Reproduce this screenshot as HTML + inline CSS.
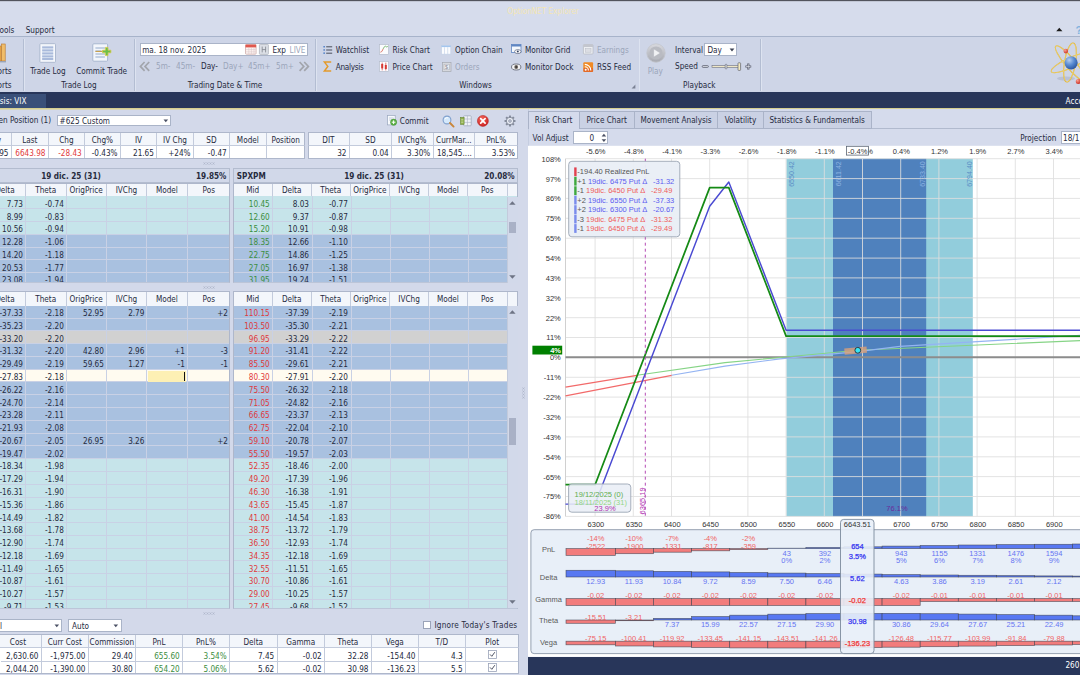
<!DOCTYPE html>
<html><head><meta charset="utf-8"><title>OptionNET Explorer</title>
<style>
html,body{margin:0;padding:0;background:#d3d9ea;}
#app{position:relative;width:1080px;height:675px;overflow:hidden;background:#d3d9ea;font-family:"DejaVu Sans Condensed","Liberation Sans",sans-serif;font-size:8.15px;color:#262b3e;}
#app div{position:absolute;box-sizing:border-box;}
#app svg{position:absolute;overflow:visible;}
.t{position:absolute;white-space:nowrap;line-height:12px;height:12px;}
.t.c{width:300px;text-align:center;}
.g{color:#9ba5ba;}
.w{color:#fff;}
.b{font-weight:bold;}
.ch{font-family:"Liberation Sans",sans-serif;font-size:7.6px;color:#333;}
.cell{position:absolute;box-sizing:border-box;}

</style></head>
<body>
<div id="app">
<div style="left:0.00px;top:0.00px;width:1080.00px;height:37.00px;background:#d6dcec;"></div>
<div style="left:0.00px;top:0.00px;width:1080.00px;height:2.00px;background:linear-gradient(#52545d 0,#52545d 50%,#c2c7d5 50%,#c2c7d5 100%);"></div>
<span class="t c" style="left:393.00px;top:5.20px;color:#f4e6b4;">OptionNET Explorer</span>
<span class="t" style="right:1065.70px;top:24.00px;">ools</span>
<span class="t" style="left:25.70px;top:24.00px;">Support</span>
<svg style="left:1055px;top:26px" width="25" height="10" viewBox="0 0 25 10"><path d="M1.2 5.2 L4.3 1.8 L7.4 5.2 Z" fill="#1a1a1a"/><text x="20.4" y="8.4" font-size="11" font-weight="bold" fill="#7fb2de" font-family="Liberation Sans,sans-serif">?</text></svg>
<div style="left:0.00px;top:36.40px;width:1080.00px;height:55.80px;background:#ced5e7;border-top:1px solid #a7b3ca;"></div>
<div style="left:23.20px;top:38.50px;width:1.60px;height:52.00px;background:linear-gradient(90deg,#b3bdd2 0,#b3bdd2 50%,#dde3f0 50%,#dde3f0 100%);"></div>
<div style="left:134.40px;top:38.50px;width:1.60px;height:52.00px;background:linear-gradient(90deg,#b3bdd2 0,#b3bdd2 50%,#dde3f0 50%,#dde3f0 100%);"></div>
<div style="left:315.40px;top:38.50px;width:1.60px;height:52.00px;background:linear-gradient(90deg,#b3bdd2 0,#b3bdd2 50%,#dde3f0 50%,#dde3f0 100%);"></div>
<div style="left:638.70px;top:38.50px;width:1.60px;height:52.00px;background:linear-gradient(90deg,#b3bdd2 0,#b3bdd2 50%,#dde3f0 50%,#dde3f0 100%);"></div>
<div style="left:760.40px;top:38.50px;width:1.60px;height:52.00px;background:linear-gradient(90deg,#b3bdd2 0,#b3bdd2 50%,#dde3f0 50%,#dde3f0 100%);"></div>
<svg style="left:0;top:43px" width="8" height="20" viewBox="0 0 8 20"><rect x="-2" y="3" width="3.2" height="15" fill="#e7a64a" stroke="#b8762a" stroke-width=".6"/><rect x="1.6" y="1" width="3.6" height="17" fill="#f0bd6a" stroke="#b8762a" stroke-width=".6"/><rect x="-2" y="18" width="8" height="1.4" fill="#9aa3b5"/></svg>
<span class="t" style="right:1068.40px;top:65.00px;">orts</span>
<span class="t" style="right:1068.40px;top:79.00px;">orts</span>
<svg style="left:39px;top:43px" width="18" height="20" viewBox="0 0 18 20"><rect x=".9" y=".7" width="15.6" height="18.6" rx=".8" fill="#f6f8fc" stroke="#a7b4cc" stroke-width=".9"/><rect x="3.2" y="2.8" width="11" height="14.4" fill="#dde5f2"/><g stroke="#a9badb" stroke-width="1.9"><path d="M3.2 4.4h11M3.2 7.4h11M3.2 10.4h11M3.2 13.4h11M3.2 16h11"/></g></svg>
<span class="t c" style="left:-102.00px;top:65.20px;">Trade Log</span>
<svg style="left:92px;top:43px" width="21" height="20" viewBox="0 0 21 20"><rect x=".8" y=".8" width="14.8" height="17.4" rx="1" fill="#f3f6fb" stroke="#a3b2cc" stroke-width=".9"/><g stroke="#b4c3dc" stroke-width="1.3"><path d="M3.4 5h9.5M3.4 8h6M3.4 11h9.5M3.4 14h9.5"/></g><path d="M3.4 8.4h8" stroke="#c89a3a" stroke-width="1"/><path d="M13.4 4.4h2.6v2.8h2.9v2.6h-2.9v2.8h-2.6V9.8h-2.9V7.2h2.9z" fill="#6cc04a" stroke="#d9c94a" stroke-width=".8"/></svg>
<span class="t c" style="left:-48.40px;top:65.20px;">Commit Trade</span>
<span class="t c" style="left:-71.00px;top:79.00px;">Trade Log</span>
<div style="left:140.00px;top:43.00px;width:167.60px;height:12.70px;background:#fff;border:1px solid #aab4c8;"></div>
<span class="t" style="left:142.20px;top:43.60px;">ma. 18 nov. 2025</span>
<svg style="left:244.5px;top:44px" width="12" height="11" viewBox="0 0 12 11"><rect x=".5" y=".6" width="10.6" height="9.6" rx=".8" fill="#fdf3f0" stroke="#c9a3a0" stroke-width=".7"/><rect x=".5" y=".6" width="10.6" height="2.8" fill="#e0584e"/><g stroke="#d7c3c6" stroke-width=".5"><path d="M1 5.6h9.6M1 7.8h9.6M3.8 3.6v6.4M6.4 3.6v6.4M9 3.6v6.4"/></g></svg>
<svg style="left:258.6px;top:44px" width="10" height="11" viewBox="0 0 10 11"><rect x=".4" y=".4" width="9" height="10" rx=".8" fill="#dcdfe6" stroke="#a9adb8" stroke-width=".7"/><path d="M3.2 2.6v5.8M6.6 2.6v5.8M3.2 5.6h3.4" stroke="#7e828c" stroke-width=".8" fill="none"/></svg>
<span class="t" style="left:272.40px;top:43.60px;">Exp</span>
<span class="t g" style="left:289.60px;top:43.60px;">LIVE</span>
<svg style="left:138.5px;top:61px" width="12" height="11" viewBox="0 0 12 11"><path d="M5.6 1 L1.4 5.4 L5.6 9.8 M10.2 1 L6 5.4 L10.2 9.8" fill="none" stroke="#a2a5ac" stroke-width="1.7"/></svg>
<svg style="left:298.4px;top:61px" width="12" height="11" viewBox="0 0 12 11"><path d="M1.6 1 L5.8 5.4 L1.6 9.8 M6.2 1 L10.4 5.4 L6.2 9.8" fill="none" stroke="#a2a5ac" stroke-width="1.7"/></svg>
<span class="t g" style="left:156.00px;top:60.30px;">5m-</span>
<span class="t g" style="left:176.00px;top:60.30px;">45m-</span>
<span class="t" style="left:201.00px;top:60.30px;">Day-</span>
<span class="t g" style="left:223.00px;top:60.30px;">Day+</span>
<span class="t g" style="left:248.00px;top:60.30px;">45m+</span>
<span class="t g" style="left:276.00px;top:60.30px;">5m+</span>
<span class="t c" style="left:75.00px;top:79.00px;">Trading Date &amp; Time</span>
<svg style="left:322.5px;top:44.5px" width="10" height="10" viewBox="0 0 10 10"><g fill="#4f7fc6"><rect x=".4" y="1" width="1.5" height="1.5"/><rect x=".4" y="4.2" width="1.5" height="1.5"/><rect x=".4" y="7.4" width="1.5" height="1.5"/></g><path d="M3.2 1.8h6M3.2 5h6M3.2 8.2h6" stroke="#4a4f5c" stroke-width="1"/></svg>
<span class="t" style="left:335.80px;top:43.60px;">Watchlist</span>
<svg style="left:322.5px;top:61px" width="10" height="11" viewBox="0 0 10 11"><path d="M8.2 1H1.4l3.4 4.4L1.4 10h6.8" fill="none" stroke="#e39a2c" stroke-width="1.5" stroke-linejoin="miter"/></svg>
<span class="t" style="left:335.80px;top:60.80px;letter-spacing:-.3px;">Analysis</span>
<svg style="left:378.6px;top:44.2px" width="10" height="11" viewBox="0 0 10 11"><rect x=".4" y=".4" width="9.2" height="10" fill="#fbfcfe" stroke="#b5bdcc" stroke-width=".7"/><path d="M1.4 8.2c1.6 0 2-2 2.8-3.4" fill="none" stroke="#d65a4a" stroke-width=".8"/><path d="M4.2 4.8c.8-1.6 1.4-2.6 2.2-2.6s1 1.6 2.4 .2" fill="none" stroke="#5aa650" stroke-width=".8"/></svg>
<span class="t" style="left:392.40px;top:43.60px;">Risk Chart</span>
<svg style="left:378.6px;top:61.2px" width="10" height="11" viewBox="0 0 10 11"><rect x=".4" y=".4" width="9.2" height="10" fill="#fbfcfe" stroke="#b5bdcc" stroke-width=".7"/><path d="M3.2 1.6v7.8M6.8 1.6v7.8" stroke="#d63a32" stroke-width=".7"/><rect x="2.2" y="3" width="2" height="4.4" fill="#d63a32"/><rect x="5.8" y="4" width="2" height="4" fill="#d63a32"/></svg>
<span class="t" style="left:392.40px;top:60.80px;">Price Chart</span>
<svg style="left:441px;top:44.6px" width="11" height="10" viewBox="0 0 11 10"><rect x=".4" y=".6" width="9.4" height="8.6" fill="#fbfcfe" stroke="#c3d0e6" stroke-width=".7"/><rect x=".4" y=".6" width="9.4" height="1.5" fill="#a4c6ee"/><path d="M3.5 2.2v7M6.7 2.2v7" stroke="#c9d6ea" stroke-width=".7"/></svg>
<span class="t" style="left:455.00px;top:43.60px;">Option Chain</span>
<svg style="left:441.6px;top:61.8px" width="10" height="10" viewBox="0 0 10 10"><rect x=".4" y=".4" width="8.6" height="9" fill="#d9dbe0" stroke="#a4a7b0" stroke-width=".7"/><rect x="2" y="2.2" width="5.4" height="5.6" fill="#eceef2" stroke="#a4a7b0" stroke-width=".5"/><text x="3" y="7.3" font-size="5.5" fill="#8d9099" font-family="Liberation Sans,sans-serif">$</text></svg>
<span class="t g" style="left:455.00px;top:60.80px;">Orders</span>
<svg style="left:511px;top:44.4px" width="11" height="11" viewBox="0 0 11 11"><rect x=".4" y=".5" width="9.6" height="8" fill="#f4f8fd" stroke="#5f86c2" stroke-width=".8"/><rect x=".4" y=".5" width="9.6" height="2" fill="#5f86c2"/><ellipse cx="6.8" cy="7.6" rx="3.2" ry="2" fill="#fff" stroke="#56607a" stroke-width=".7"/><circle cx="6.8" cy="7.6" r="1" fill="#33405e"/></svg>
<span class="t" style="left:525.00px;top:43.60px;">Monitor Grid</span>
<svg style="left:511px;top:62.8px" width="11" height="8" viewBox="0 0 11 8"><ellipse cx="5.2" cy="4" rx="4.7" ry="3" fill="#f2f2f4" stroke="#5b5e6b" stroke-width=".8"/><circle cx="5.2" cy="4" r="1.9" fill="#6a6258"/><circle cx="5.2" cy="4" r=".8" fill="#20222a"/></svg>
<span class="t" style="left:525.00px;top:60.80px;">Monitor Dock</span>
<svg style="left:583px;top:44.2px" width="11" height="11" viewBox="0 0 11 11"><rect x=".4" y=".6" width="9.6" height="9.4" rx=".8" fill="#eceef2" stroke="#b4b7c0" stroke-width=".7"/><rect x=".4" y=".6" width="9.6" height="2.4" fill="#c3c6ce"/><rect x="2.4" y="4.6" width="5.6" height="3.6" fill="#dcdee4" stroke="#b9bcc5" stroke-width=".5"/></svg>
<span class="t g" style="left:597.00px;top:43.60px;">Earnings</span>
<svg style="left:583px;top:61.6px" width="11" height="11" viewBox="0 0 11 11"><rect x=".3" y=".3" width="9.8" height="9.8" rx="1" fill="#f08a24"/><rect x=".3" y="6" width="9.8" height="4.1" rx="1" fill="#d8502a" opacity=".55"/><circle cx="2.7" cy="7.8" r="1" fill="#fff"/><path d="M1.8 4.8a3.6 3.6 0 0 1 3.6 3.6M1.8 2.4a6 6 0 0 1 6 6" fill="none" stroke="#fff" stroke-width="1.1"/></svg>
<span class="t" style="left:597.00px;top:60.80px;">RSS Feed</span>
<span class="t c" style="left:325.50px;top:79.00px;">Windows</span>
<svg style="left:630.6px;top:83.6px" width="5" height="5" viewBox="0 0 5 5"><path d="M4.4 .6V4.4H.6Z" fill="#7a8194"/></svg>
<svg style="left:645.5px;top:43.4px" width="20" height="20" viewBox="0 0 20 20"><defs><linearGradient id="pg" x1="0" y1="0" x2="0" y2="1"><stop offset="0" stop-color="#d9dadf"/><stop offset="1" stop-color="#a6a8b0"/></linearGradient></defs><circle cx="10" cy="10" r="9.2" fill="url(#pg)" stroke="#c3c5cb" stroke-width=".8"/><circle cx="10" cy="10" r="6.6" fill="#b9bbc2"/><path d="M7.6 5.8L14.4 10L7.6 14.2Z" fill="#f1f2f4" stroke="#b1b3ba" stroke-width=".5"/></svg>
<span class="t g c" style="left:505.30px;top:65.40px;">Play</span>
<span class="t" style="left:675.00px;top:43.60px;">Interval</span>
<div style="left:704.00px;top:43.00px;width:33.20px;height:12.70px;background:#fff;border:1px solid #aab4c8;"></div>
<span class="t" style="left:707.40px;top:43.60px;">Day</span>
<svg style="left:729px;top:47.6px" width="6" height="4" viewBox="0 0 6 4"><path d="M.6 .5h4.8L3 3.4Z" fill="#3c4254"/></svg>
<span class="t" style="left:675.00px;top:60.20px;">Speed</span>
<svg style="left:701px;top:61px" width="52" height="11" viewBox="0 0 52 11"><rect x="1.2" y="4.6" width="6.2" height="1.8" rx=".9" fill="#dfe2ea" stroke="#595d6e" stroke-width=".8"/><rect x="11" y="4.6" width="28" height="1.9" fill="#efe7c6" stroke="#6c7080" stroke-width=".6"/><rect x="24.2" y="3.2" width="1.7" height="4.8" rx=".8" fill="#e9ebf0" stroke="#5d6170" stroke-width=".6"/><rect x="37" y="1.8" width="2.6" height="7.6" rx=".6" fill="#f6ecc0" stroke="#5d6170" stroke-width=".7"/><path d="M44.4 5.5h5.8M47.3 2.6v5.8" stroke="#595d6e" stroke-width="2.2"/><path d="M45 5.5h4.6M47.3 3.2v4.6" stroke="#e4e7ee" stroke-width=".7"/></svg>
<span class="t c" style="left:549.30px;top:79.00px;">Playback</span>
<svg style="left:1049px;top:41px" width="34" height="46" viewBox="0 0 34 46">
<defs><radialGradient id="sph" cx=".36" cy=".3" r=".78"><stop offset="0" stop-color="#b4cef0"/><stop offset=".5" stop-color="#5588d0"/><stop offset="1" stop-color="#274f98"/></radialGradient>
<radialGradient id="rd" cx=".35" cy=".3" r=".8"><stop offset="0" stop-color="#f9a090"/><stop offset="1" stop-color="#c8281e"/></radialGradient></defs>
<ellipse cx="17" cy="37.5" rx="9" ry="2" fill="#8f98ae" opacity=".32"/>
<g fill="none" stroke="#ddb032" stroke-width="1.1">
<ellipse cx="21" cy="22" rx="22" ry="5" transform="rotate(50 21 22)"/>
<ellipse cx="21" cy="22" rx="20.5" ry="5" transform="rotate(-25 21 22)"/>
<ellipse cx="21" cy="21.5" rx="5.6" ry="19.7" transform="rotate(9.6 21 21.5)"/>
</g>
<g fill="none" stroke="#f8e690" stroke-width=".45">
<ellipse cx="21" cy="22" rx="22" ry="5" transform="rotate(50 21 22)"/>
<ellipse cx="21" cy="22" rx="20.5" ry="5" transform="rotate(-25 21 22)"/>
<ellipse cx="21" cy="21.5" rx="5.6" ry="19.7" transform="rotate(9.6 21 21.5)"/>
</g>
<circle cx="22.1" cy="21.8" r="6.6" fill="url(#sph)"/>
<circle cx="16.8" cy="10.1" r="2.3" fill="url(#rd)"/>
<circle cx="29.3" cy="40.4" r="2.5" fill="url(#rd)"/>
</svg>
<div style="left:0.00px;top:92.20px;width:1080.00px;height:15.50px;background:#28365a;"></div>
<div style="left:0.00px;top:94.20px;width:46.40px;height:13.50px;background:#3a5079;"></div>
<span class="t w" style="right:1053.60px;top:95.20px;">sis: VIX</span>
<span class="t w" style="left:1065.60px;top:95.20px;">Account</span>
<div style="left:0.00px;top:108.00px;width:1080.00px;height:2.00px;background:linear-gradient(#d6ce90 0,#d6ce90 50%,#dad7b4 50%,#dad7b4 100%);"></div>
<span class="t" style="right:1029.00px;top:114.40px;">en Position (1)</span>
<div style="left:57.00px;top:114.60px;width:114.20px;height:11.80px;background:#fff;border:1px solid #aab4c8;"></div>
<span class="t" style="left:59.60px;top:114.60px;">#625 Custom</span>
<svg style="left:163px;top:119px" width="6" height="4" viewBox="0 0 6 4"><path d="M.5 .5h4.6L2.8 3.3Z" fill="#4a5064"/></svg>
<svg style="left:386.6px;top:115px" width="11" height="11" viewBox="0 0 11 11"><rect x=".6" y=".5" width="7.6" height="9.4" fill="#f7f9fc" stroke="#9aa7be" stroke-width=".7"/><path d="M2 3h4.6M2 5h3" stroke="#b9c4d8" stroke-width=".8"/><circle cx="6.6" cy="7.2" r="3.1" fill="#5fb348" stroke="#3a8a2c" stroke-width=".5"/><path d="M6.6 5.4v3.6M4.8 7.2h3.6" stroke="#fff" stroke-width="1"/></svg>
<span class="t" style="left:399.80px;top:114.80px;">Commit</span>
<svg style="left:442px;top:114.6px" width="13" height="13" viewBox="0 0 13 13"><circle cx="5" cy="5" r="3.9" fill="#d4e8fb" stroke="#7f9fcc" stroke-width="1.1"/><path d="M3 4.2a2.4 2.4 0 0 1 3-1.4" stroke="#fff" stroke-width=".9" fill="none"/><path d="M8 8l3.6 3.6" stroke="#c9863a" stroke-width="1.9" stroke-linecap="round"/></svg>
<svg style="left:459.6px;top:114.8px" width="12" height="12" viewBox="0 0 12 12"><rect x="3.6" y=".8" width="7.6" height="10" rx=".8" fill="#f0f3f8" stroke="#98a2b6" stroke-width=".7"/><path d="M7.4 .8v10M3.6 4h7.6M3.6 7.4h7.6" stroke="#a7b0c2" stroke-width=".6"/><rect x=".5" y="2.4" width="3.6" height="7" fill="#8cae48" stroke="#5f7f28" stroke-width=".5"/><path d="M1.2 4.4h2.2M1.2 6h2.2M1.2 7.6h2.2" stroke="#dbe8b8" stroke-width=".6"/></svg>
<svg style="left:477.2px;top:114.6px" width="12" height="12" viewBox="0 0 12 12"><defs><radialGradient id="rx" cx=".4" cy=".3" r=".8"><stop offset="0" stop-color="#f4655a"/><stop offset="1" stop-color="#c81e1e"/></radialGradient></defs><circle cx="5.9" cy="5.9" r="5.5" fill="url(#rx)" stroke="#b01c1c" stroke-width=".5"/><path d="M3.7 3.7l4.4 4.4M8.1 3.7l-4.4 4.4" stroke="#fff" stroke-width="1.7" stroke-linecap="round"/></svg>
<svg style="left:503.6px;top:114.6px" width="12" height="12" viewBox="0 0 12 12"><g transform="translate(6 6)"><g fill="#858c9c"><rect x="-1.05" y="-5.5" width="2.1" height="2.6" rx=".5" transform="rotate(0)"/><rect x="-1.05" y="-5.5" width="2.1" height="2.6" rx=".5" transform="rotate(45)"/><rect x="-1.05" y="-5.5" width="2.1" height="2.6" rx=".5" transform="rotate(90)"/><rect x="-1.05" y="-5.5" width="2.1" height="2.6" rx=".5" transform="rotate(135)"/><rect x="-1.05" y="-5.5" width="2.1" height="2.6" rx=".5" transform="rotate(180)"/><rect x="-1.05" y="-5.5" width="2.1" height="2.6" rx=".5" transform="rotate(225)"/><rect x="-1.05" y="-5.5" width="2.1" height="2.6" rx=".5" transform="rotate(270)"/><rect x="-1.05" y="-5.5" width="2.1" height="2.6" rx=".5" transform="rotate(315)"/></g><circle r="3.7" fill="#e6eaf2" stroke="#858c9c" stroke-width="1"/><circle r="1.3" fill="#d3d9ea" stroke="#858c9c" stroke-width=".8"/></g></svg>
<div style="left:-25.00px;top:132.00px;width:330.30px;height:27.30px;background:#fff;border:1px solid #aeb7cb;overflow:hidden;"></div>
<div style="left:0.00px;top:132.00px;width:305.30px;height:14.30px;background:#f3f6fb;border:1px solid #aeb7cb;border-bottom:1px solid #c3cbdc;border-left:none;"></div>
<span class="t c" style="left:-156.85px;top:133.55px;">Prev</span>
<span class="t c" style="left:-120.20px;top:133.55px;">Last</span>
<span class="t c" style="left:-83.60px;top:133.55px;">Chg</span>
<span class="t c" style="left:-47.60px;top:133.55px;">Chg%</span>
<span class="t c" style="left:-11.50px;top:133.55px;">IV</span>
<span class="t c" style="left:25.00px;top:133.55px;">IV Chg</span>
<span class="t c" style="left:61.40px;top:133.55px;">SD</span>
<span class="t c" style="left:97.85px;top:133.55px;">Model</span>
<span class="t c" style="left:135.75px;top:133.55px;">Position</span>
<div style="left:10.80px;top:133.00px;width:1.00px;height:25.30px;background:#c3cbdc;"></div>
<div style="left:47.80px;top:133.00px;width:1.00px;height:25.30px;background:#c3cbdc;"></div>
<div style="left:84.00px;top:133.00px;width:1.00px;height:25.30px;background:#c3cbdc;"></div>
<div style="left:119.80px;top:133.00px;width:1.00px;height:25.30px;background:#c3cbdc;"></div>
<div style="left:156.20px;top:133.00px;width:1.00px;height:25.30px;background:#c3cbdc;"></div>
<div style="left:192.80px;top:133.00px;width:1.00px;height:25.30px;background:#c3cbdc;"></div>
<div style="left:229.00px;top:133.00px;width:1.00px;height:25.30px;background:#c3cbdc;"></div>
<div style="left:265.70px;top:133.00px;width:1.00px;height:25.30px;background:#c3cbdc;"></div>
<span class="t" style="right:1071.50px;top:147.20px;">6672.95</span>
<span class="t" style="right:1034.50px;top:147.20px;color:#df3a3c;">6643.98</span>
<span class="t" style="right:998.30px;top:147.20px;color:#df3a3c;">-28.43</span>
<span class="t" style="right:962.50px;top:147.20px;">-0.43%</span>
<span class="t" style="right:926.10px;top:147.20px;">21.65</span>
<span class="t" style="right:889.50px;top:147.20px;">+24%</span>
<span class="t" style="right:853.30px;top:147.20px;">-0.47</span>
<div style="left:307.50px;top:132.00px;width:210.30px;height:27.30px;background:#fff;border:1px solid #aeb7cb;overflow:hidden;"></div>
<div style="left:307.50px;top:132.00px;width:210.30px;height:14.30px;background:#f3f6fb;border:1px solid #aeb7cb;border-bottom:1px solid #c3cbdc;"></div>
<span class="t c" style="left:178.40px;top:133.55px;">DIT</span>
<span class="t c" style="left:220.40px;top:133.55px;">SD</span>
<span class="t c" style="left:262.30px;top:133.55px;">IVChg%</span>
<span class="t c" style="left:303.85px;top:133.55px;">CurrMar...</span>
<span class="t c" style="left:346.20px;top:133.55px;">PnL%</span>
<div style="left:348.80px;top:133.00px;width:1.00px;height:25.30px;background:#c3cbdc;"></div>
<div style="left:391.00px;top:133.00px;width:1.00px;height:25.30px;background:#c3cbdc;"></div>
<div style="left:432.60px;top:133.00px;width:1.00px;height:25.30px;background:#c3cbdc;"></div>
<div style="left:474.10px;top:133.00px;width:1.00px;height:25.30px;background:#c3cbdc;"></div>
<span class="t" style="right:733.50px;top:147.20px;">32</span>
<span class="t" style="right:691.30px;top:147.20px;">0.04</span>
<span class="t" style="right:649.70px;top:147.20px;">3.30%</span>
<span class="t" style="right:608.20px;top:147.20px;">18,545....</span>
<span class="t" style="right:565.00px;top:147.20px;">3.53%</span>
<svg style="left:202.5px;top:162.4px" width="13" height="3" viewBox="0 0 13 3"><path d="M.5 .3l2 2.4M2.5 .3l-2 2.4M3.5 .3l2 2.4M5.5 .3l-2 2.4M6.5 .3l2 2.4M8.5 .3l-2 2.4M9.5 .3l2 2.4M11.5 .3l-2 2.4" stroke="#aab2c6" stroke-width=".6" fill="none"/></svg>
<svg style="left:202.5px;top:285.7px" width="13" height="3" viewBox="0 0 13 3"><path d="M.5 .3l2 2.4M2.5 .3l-2 2.4M3.5 .3l2 2.4M5.5 .3l-2 2.4M6.5 .3l2 2.4M8.5 .3l-2 2.4M9.5 .3l2 2.4M11.5 .3l-2 2.4" stroke="#aab2c6" stroke-width=".6" fill="none"/></svg>
<svg style="left:202.5px;top:611.9px" width="13" height="3" viewBox="0 0 13 3"><path d="M.5 .3l2 2.4M2.5 .3l-2 2.4M3.5 .3l2 2.4M5.5 .3l-2 2.4M6.5 .3l2 2.4M8.5 .3l-2 2.4M9.5 .3l2 2.4M11.5 .3l-2 2.4" stroke="#aab2c6" stroke-width=".6" fill="none"/></svg>
<div style="left:-2.00px;top:168.00px;width:232.30px;height:14.60px;background:#d1d8e9;border:1px solid #b3bccf;"></div>
<span class="t b c" style="left:-79.00px;top:169.60px;">19 dic. 25 (31)</span>
<span class="t b" style="right:853.60px;top:169.60px;">19.85%</span>
<div style="left:233.30px;top:168.00px;width:284.50px;height:14.60px;background:#d1d8e9;border:1px solid #b3bccf;"></div>
<span class="t b" style="left:236.80px;top:169.60px;">SPXPM</span>
<span class="t b c" style="left:224.00px;top:169.60px;">19 dic. 25 (31)</span>
<span class="t b" style="right:565.30px;top:169.60px;">20.08%</span>
<div style="left:0.00px;top:183.00px;width:230.30px;height:13.00px;background:#f3f6fb;border:1px solid #aeb7cb;border-bottom:none;border-left:none;"></div>
<span class="t c" style="left:-145.10px;top:184.25px;">Delta</span>
<span class="t c" style="left:-104.25px;top:184.25px;">Theta</span>
<div style="left:24.80px;top:184.00px;width:1.00px;height:12.00px;background:#c3cbdc;"></div>
<span class="t c" style="left:-63.80px;top:184.25px;">OrigPrice</span>
<div style="left:65.70px;top:184.00px;width:1.00px;height:12.00px;background:#c3cbdc;"></div>
<span class="t c" style="left:-23.55px;top:184.25px;">IVChg</span>
<div style="left:105.70px;top:184.00px;width:1.00px;height:12.00px;background:#c3cbdc;"></div>
<span class="t c" style="left:16.95px;top:184.25px;">Model</span>
<div style="left:146.20px;top:184.00px;width:1.00px;height:12.00px;background:#c3cbdc;"></div>
<span class="t c" style="left:58.75px;top:184.25px;">Pos</span>
<div style="left:186.70px;top:184.00px;width:1.00px;height:12.00px;background:#c3cbdc;"></div>
<div style="left:0.00px;top:196.00px;width:230.30px;height:87.00px;overflow:hidden;border-left:0px solid #aeb7cb;border-right:1px solid #aeb7cb;border-bottom:1px solid #bcc5d8;background:#c6e4ea;"><div style="left:0;top:0px;width:230.30px;height:13px;background:#c6e4ea;border-bottom:1px solid #c9d1e5;"></div><div style="left:0;top:13px;width:230.30px;height:13px;background:#c6e4ea;border-bottom:1px solid #c9d1e5;"></div><div style="left:0;top:26px;width:230.30px;height:13px;background:#c6e4ea;border-bottom:1px solid #c9d1e5;"></div><div style="left:0;top:39px;width:230.30px;height:13px;background:#a9c1e0;border-bottom:1px solid #c9d1e5;"></div><div style="left:0;top:52px;width:230.30px;height:12px;background:#a9c1e0;border-bottom:1px solid #c9d1e5;"></div><div style="left:0;top:64px;width:230.30px;height:13px;background:#a9c1e0;border-bottom:1px solid #c9d1e5;"></div><div style="left:0;top:77px;width:230.30px;height:13px;background:#a9c1e0;border-bottom:1px solid #c9d1e5;"></div><div style="left:24.80px;top:0;width:1px;height:87px;background:#c9d1e5;"></div><div style="left:65.70px;top:0;width:1px;height:87px;background:#c9d1e5;"></div><div style="left:105.70px;top:0;width:1px;height:87px;background:#c9d1e5;"></div><div style="left:146.20px;top:0;width:1px;height:87px;background:#c9d1e5;"></div><div style="left:186.70px;top:0;width:1px;height:87px;background:#c9d1e5;"></div><span class="t" style="right:206.30px;top:1.79px;">7.73</span><span class="t" style="right:165.40px;top:1.79px;">-0.74</span><span class="t" style="right:206.30px;top:14.57px;">8.99</span><span class="t" style="right:165.40px;top:14.57px;">-0.83</span><span class="t" style="right:206.30px;top:27.35px;">10.56</span><span class="t" style="right:165.40px;top:27.35px;">-0.94</span><span class="t" style="right:206.30px;top:40.13px;">12.28</span><span class="t" style="right:165.40px;top:40.13px;">-1.06</span><span class="t" style="right:206.30px;top:52.91px;">14.20</span><span class="t" style="right:165.40px;top:52.91px;">-1.18</span><span class="t" style="right:206.30px;top:65.69px;">20.53</span><span class="t" style="right:165.40px;top:65.69px;">-1.77</span><span class="t" style="right:206.30px;top:78.47px;">23.08</span><span class="t" style="right:165.40px;top:78.47px;">-1.94</span></div>
<div style="left:233.30px;top:183.00px;width:284.50px;height:13.00px;background:#f3f6fb;border:1px solid #aeb7cb;border-bottom:none;"></div>
<span class="t c" style="left:102.65px;top:184.25px;">Mid</span>
<span class="t c" style="left:141.65px;top:184.25px;">Delta</span>
<div style="left:271.50px;top:184.00px;width:1.00px;height:12.00px;background:#c3cbdc;"></div>
<span class="t c" style="left:180.75px;top:184.25px;">Theta</span>
<div style="left:310.80px;top:184.00px;width:1.00px;height:12.00px;background:#c3cbdc;"></div>
<span class="t c" style="left:219.90px;top:184.25px;">OrigPrice</span>
<div style="left:349.70px;top:184.00px;width:1.00px;height:12.00px;background:#c3cbdc;"></div>
<span class="t c" style="left:259.05px;top:184.25px;">IVChg</span>
<div style="left:389.10px;top:184.00px;width:1.00px;height:12.00px;background:#c3cbdc;"></div>
<span class="t c" style="left:297.95px;top:184.25px;">Model</span>
<div style="left:428.00px;top:184.00px;width:1.00px;height:12.00px;background:#c3cbdc;"></div>
<span class="t c" style="left:337.30px;top:184.25px;">Pos</span>
<div style="left:466.90px;top:184.00px;width:1.00px;height:12.00px;background:#c3cbdc;"></div>
<div style="left:506.70px;top:184.00px;width:1.00px;height:12.00px;background:#c3cbdc;"></div>
<div style="left:233.30px;top:196.00px;width:284.50px;height:87.00px;overflow:hidden;border-left:1px solid #aeb7cb;border-right:1px solid #aeb7cb;border-bottom:1px solid #bcc5d8;background:#c6e4ea;"><div style="left:0;top:0px;width:273.90px;height:13px;background:#c6e4ea;border-bottom:1px solid #c9d1e5;"></div><div style="left:0;top:13px;width:273.90px;height:13px;background:#c6e4ea;border-bottom:1px solid #c9d1e5;"></div><div style="left:0;top:26px;width:273.90px;height:13px;background:#c6e4ea;border-bottom:1px solid #c9d1e5;"></div><div style="left:0;top:39px;width:273.90px;height:13px;background:#a9c1e0;border-bottom:1px solid #c9d1e5;"></div><div style="left:0;top:52px;width:273.90px;height:12px;background:#a9c1e0;border-bottom:1px solid #c9d1e5;"></div><div style="left:0;top:64px;width:273.90px;height:13px;background:#a9c1e0;border-bottom:1px solid #c9d1e5;"></div><div style="left:0;top:77px;width:273.90px;height:13px;background:#a9c1e0;border-bottom:1px solid #c9d1e5;"></div><div style="left:38.20px;top:0;width:1px;height:87px;background:#c9d1e5;"></div><div style="left:77.50px;top:0;width:1px;height:87px;background:#c9d1e5;"></div><div style="left:116.40px;top:0;width:1px;height:87px;background:#c9d1e5;"></div><div style="left:155.80px;top:0;width:1px;height:87px;background:#c9d1e5;"></div><div style="left:194.70px;top:0;width:1px;height:87px;background:#c9d1e5;"></div><div style="left:233.60px;top:0;width:1px;height:87px;background:#c9d1e5;"></div><span class="t" style="right:247.10px;top:1.79px;color:#3d8e3f;">10.45</span><span class="t" style="right:207.80px;top:1.79px;">8.03</span><span class="t" style="right:168.90px;top:1.79px;">-0.77</span><span class="t" style="right:247.10px;top:14.57px;color:#3d8e3f;">12.60</span><span class="t" style="right:207.80px;top:14.57px;">9.37</span><span class="t" style="right:168.90px;top:14.57px;">-0.87</span><span class="t" style="right:247.10px;top:27.35px;color:#3d8e3f;">15.20</span><span class="t" style="right:207.80px;top:27.35px;">10.91</span><span class="t" style="right:168.90px;top:27.35px;">-0.98</span><span class="t" style="right:247.10px;top:40.13px;color:#3d8e3f;">18.35</span><span class="t" style="right:207.80px;top:40.13px;">12.66</span><span class="t" style="right:168.90px;top:40.13px;">-1.10</span><span class="t" style="right:247.10px;top:52.91px;color:#3d8e3f;">22.75</span><span class="t" style="right:207.80px;top:52.91px;">14.86</span><span class="t" style="right:168.90px;top:52.91px;">-1.25</span><span class="t" style="right:247.10px;top:65.69px;color:#3d8e3f;">27.05</span><span class="t" style="right:207.80px;top:65.69px;">16.97</span><span class="t" style="right:168.90px;top:65.69px;">-1.38</span><span class="t" style="right:247.10px;top:78.47px;color:#3d8e3f;">31.95</span><span class="t" style="right:207.80px;top:78.47px;">19.24</span><span class="t" style="right:168.90px;top:78.47px;">-1.51</span></div>
<div style="left:0.00px;top:291.00px;width:230.30px;height:15.00px;background:#f3f6fb;border:1px solid #aeb7cb;border-bottom:none;border-left:none;"></div>
<span class="t c" style="left:-145.10px;top:292.90px;">Delta</span>
<span class="t c" style="left:-104.25px;top:292.90px;">Theta</span>
<div style="left:24.80px;top:292.00px;width:1.00px;height:14.00px;background:#c3cbdc;"></div>
<span class="t c" style="left:-63.80px;top:292.90px;">OrigPrice</span>
<div style="left:65.70px;top:292.00px;width:1.00px;height:14.00px;background:#c3cbdc;"></div>
<span class="t c" style="left:-23.55px;top:292.90px;">IVChg</span>
<div style="left:105.70px;top:292.00px;width:1.00px;height:14.00px;background:#c3cbdc;"></div>
<span class="t c" style="left:16.95px;top:292.90px;">Model</span>
<div style="left:146.20px;top:292.00px;width:1.00px;height:14.00px;background:#c3cbdc;"></div>
<span class="t c" style="left:58.75px;top:292.90px;">Pos</span>
<div style="left:186.70px;top:292.00px;width:1.00px;height:14.00px;background:#c3cbdc;"></div>
<div style="left:0.00px;top:306.00px;width:230.30px;height:303.00px;overflow:hidden;border-left:0px solid #aeb7cb;border-right:1px solid #aeb7cb;border-bottom:1px solid #bcc5d8;background:#c6e4ea;"><div style="left:0;top:0px;width:230.30px;height:13px;background:#a9c1e0;border-bottom:1px solid #c9d1e5;"></div><div style="left:0;top:13px;width:230.30px;height:12px;background:#a9c1e0;border-bottom:1px solid #c9d1e5;"></div><div style="left:0;top:25px;width:230.30px;height:13px;background:#d1d1d1;border-bottom:1px solid #c9d1e5;"></div><div style="left:0;top:38px;width:230.30px;height:13px;background:#a9c1e0;border-bottom:1px solid #c9d1e5;"></div><div style="left:0;top:51px;width:230.30px;height:13px;background:#a9c1e0;border-bottom:1px solid #c9d1e5;"></div><div style="left:0;top:64px;width:230.30px;height:12px;background:#fffbf0;border-bottom:1px solid #c9d1e5;"></div><div style="left:0;top:76px;width:230.30px;height:13px;background:#a9c1e0;border-bottom:1px solid #c9d1e5;"></div><div style="left:0;top:89px;width:230.30px;height:13px;background:#a9c1e0;border-bottom:1px solid #c9d1e5;"></div><div style="left:0;top:102px;width:230.30px;height:13px;background:#a9c1e0;border-bottom:1px solid #c9d1e5;"></div><div style="left:0;top:115px;width:230.30px;height:13px;background:#a9c1e0;border-bottom:1px solid #c9d1e5;"></div><div style="left:0;top:128px;width:230.30px;height:12px;background:#a9c1e0;border-bottom:1px solid #c9d1e5;"></div><div style="left:0;top:140px;width:230.30px;height:13px;background:#a9c1e0;border-bottom:1px solid #c9d1e5;"></div><div style="left:0;top:153px;width:230.30px;height:13px;background:#c6e4ea;border-bottom:1px solid #c9d1e5;"></div><div style="left:0;top:166px;width:230.30px;height:13px;background:#c6e4ea;border-bottom:1px solid #c9d1e5;"></div><div style="left:0;top:179px;width:230.30px;height:13px;background:#c6e4ea;border-bottom:1px solid #c9d1e5;"></div><div style="left:0;top:192px;width:230.30px;height:12px;background:#c6e4ea;border-bottom:1px solid #c9d1e5;"></div><div style="left:0;top:204px;width:230.30px;height:13px;background:#c6e4ea;border-bottom:1px solid #c9d1e5;"></div><div style="left:0;top:217px;width:230.30px;height:13px;background:#c6e4ea;border-bottom:1px solid #c9d1e5;"></div><div style="left:0;top:230px;width:230.30px;height:13px;background:#c6e4ea;border-bottom:1px solid #c9d1e5;"></div><div style="left:0;top:243px;width:230.30px;height:12px;background:#c6e4ea;border-bottom:1px solid #c9d1e5;"></div><div style="left:0;top:255px;width:230.30px;height:13px;background:#c6e4ea;border-bottom:1px solid #c9d1e5;"></div><div style="left:0;top:268px;width:230.30px;height:13px;background:#c6e4ea;border-bottom:1px solid #c9d1e5;"></div><div style="left:0;top:281px;width:230.30px;height:13px;background:#c6e4ea;border-bottom:1px solid #c9d1e5;"></div><div style="left:0;top:294px;width:230.30px;height:13px;background:#c6e4ea;border-bottom:1px solid #c9d1e5;"></div><div style="left:24.80px;top:0;width:1px;height:303px;background:#c9d1e5;"></div><div style="left:65.70px;top:0;width:1px;height:303px;background:#c9d1e5;"></div><div style="left:105.70px;top:0;width:1px;height:303px;background:#c9d1e5;"></div><div style="left:146.20px;top:0;width:1px;height:303px;background:#c9d1e5;"></div><div style="left:186.70px;top:0;width:1px;height:303px;background:#c9d1e5;"></div><span class="t" style="right:206.30px;top:1.09px;">-37.33</span><span class="t" style="right:165.40px;top:1.09px;">-2.18</span><span class="t" style="right:125.40px;top:1.09px;">52.95</span><span class="t" style="right:84.90px;top:1.09px;">2.79</span><span class="t" style="right:1.30px;top:1.09px;">+2</span><span class="t" style="right:206.30px;top:13.87px;">-35.23</span><span class="t" style="right:165.40px;top:13.87px;">-2.20</span><span class="t" style="right:206.30px;top:26.65px;">-33.20</span><span class="t" style="right:165.40px;top:26.65px;">-2.20</span><span class="t" style="right:206.30px;top:39.43px;">-31.32</span><span class="t" style="right:165.40px;top:39.43px;">-2.20</span><span class="t" style="right:125.40px;top:39.43px;">42.80</span><span class="t" style="right:84.90px;top:39.43px;">2.96</span><span class="t" style="right:44.40px;top:39.43px;">+1</span><span class="t" style="right:1.30px;top:39.43px;">-3</span><span class="t" style="right:206.30px;top:52.21px;">-29.49</span><span class="t" style="right:165.40px;top:52.21px;">-2.19</span><span class="t" style="right:125.40px;top:52.21px;">59.65</span><span class="t" style="right:84.90px;top:52.21px;">1.27</span><span class="t" style="right:44.40px;top:52.21px;">-1</span><span class="t" style="right:1.30px;top:52.21px;">-1</span><span class="t" style="right:206.30px;top:64.99px;">-27.83</span><span class="t" style="right:165.40px;top:64.99px;">-2.18</span><span class="t" style="right:206.30px;top:77.77px;">-26.22</span><span class="t" style="right:165.40px;top:77.77px;">-2.16</span><span class="t" style="right:206.30px;top:90.55px;">-24.70</span><span class="t" style="right:165.40px;top:90.55px;">-2.14</span><span class="t" style="right:206.30px;top:103.33px;">-23.28</span><span class="t" style="right:165.40px;top:103.33px;">-2.11</span><span class="t" style="right:206.30px;top:116.11px;">-21.93</span><span class="t" style="right:165.40px;top:116.11px;">-2.08</span><span class="t" style="right:206.30px;top:128.89px;">-20.67</span><span class="t" style="right:165.40px;top:128.89px;">-2.05</span><span class="t" style="right:125.40px;top:128.89px;">26.95</span><span class="t" style="right:84.90px;top:128.89px;">3.26</span><span class="t" style="right:1.30px;top:128.89px;">+2</span><span class="t" style="right:206.30px;top:141.67px;">-19.47</span><span class="t" style="right:165.40px;top:141.67px;">-2.02</span><span class="t" style="right:206.30px;top:154.45px;">-18.34</span><span class="t" style="right:165.40px;top:154.45px;">-1.98</span><span class="t" style="right:206.30px;top:167.23px;">-17.29</span><span class="t" style="right:165.40px;top:167.23px;">-1.94</span><span class="t" style="right:206.30px;top:180.01px;">-16.31</span><span class="t" style="right:165.40px;top:180.01px;">-1.90</span><span class="t" style="right:206.30px;top:192.79px;">-15.36</span><span class="t" style="right:165.40px;top:192.79px;">-1.86</span><span class="t" style="right:206.30px;top:205.57px;">-14.49</span><span class="t" style="right:165.40px;top:205.57px;">-1.82</span><span class="t" style="right:206.30px;top:218.35px;">-13.68</span><span class="t" style="right:165.40px;top:218.35px;">-1.78</span><span class="t" style="right:206.30px;top:231.13px;">-12.90</span><span class="t" style="right:165.40px;top:231.13px;">-1.74</span><span class="t" style="right:206.30px;top:243.91px;">-12.18</span><span class="t" style="right:165.40px;top:243.91px;">-1.69</span><span class="t" style="right:206.30px;top:256.69px;">-11.49</span><span class="t" style="right:165.40px;top:256.69px;">-1.65</span><span class="t" style="right:206.30px;top:269.47px;">-10.87</span><span class="t" style="right:165.40px;top:269.47px;">-1.61</span><span class="t" style="right:206.30px;top:282.25px;">-10.27</span><span class="t" style="right:165.40px;top:282.25px;">-1.57</span><span class="t" style="right:206.30px;top:295.03px;">-9.71</span><span class="t" style="right:165.40px;top:295.03px;">-1.53</span></div>
<div style="left:233.30px;top:291.00px;width:284.50px;height:15.00px;background:#f3f6fb;border:1px solid #aeb7cb;border-bottom:none;"></div>
<span class="t c" style="left:102.65px;top:292.90px;">Mid</span>
<span class="t c" style="left:141.65px;top:292.90px;">Delta</span>
<div style="left:271.50px;top:292.00px;width:1.00px;height:14.00px;background:#c3cbdc;"></div>
<span class="t c" style="left:180.75px;top:292.90px;">Theta</span>
<div style="left:310.80px;top:292.00px;width:1.00px;height:14.00px;background:#c3cbdc;"></div>
<span class="t c" style="left:219.90px;top:292.90px;">OrigPrice</span>
<div style="left:349.70px;top:292.00px;width:1.00px;height:14.00px;background:#c3cbdc;"></div>
<span class="t c" style="left:259.05px;top:292.90px;">IVChg</span>
<div style="left:389.10px;top:292.00px;width:1.00px;height:14.00px;background:#c3cbdc;"></div>
<span class="t c" style="left:297.95px;top:292.90px;">Model</span>
<div style="left:428.00px;top:292.00px;width:1.00px;height:14.00px;background:#c3cbdc;"></div>
<span class="t c" style="left:337.30px;top:292.90px;">Pos</span>
<div style="left:466.90px;top:292.00px;width:1.00px;height:14.00px;background:#c3cbdc;"></div>
<div style="left:506.70px;top:292.00px;width:1.00px;height:14.00px;background:#c3cbdc;"></div>
<div style="left:233.30px;top:306.00px;width:284.50px;height:303.00px;overflow:hidden;border-left:1px solid #aeb7cb;border-right:1px solid #aeb7cb;border-bottom:1px solid #bcc5d8;background:#c6e4ea;"><div style="left:0;top:0px;width:273.90px;height:13px;background:#a9c1e0;border-bottom:1px solid #c9d1e5;"></div><div style="left:0;top:13px;width:273.90px;height:12px;background:#a9c1e0;border-bottom:1px solid #c9d1e5;"></div><div style="left:0;top:25px;width:273.90px;height:13px;background:#d1d1d1;border-bottom:1px solid #c9d1e5;"></div><div style="left:0;top:38px;width:273.90px;height:13px;background:#a9c1e0;border-bottom:1px solid #c9d1e5;"></div><div style="left:0;top:51px;width:273.90px;height:13px;background:#a9c1e0;border-bottom:1px solid #c9d1e5;"></div><div style="left:0;top:64px;width:273.90px;height:12px;background:#fffbf0;border-bottom:1px solid #c9d1e5;"></div><div style="left:0;top:76px;width:273.90px;height:13px;background:#a9c1e0;border-bottom:1px solid #c9d1e5;"></div><div style="left:0;top:89px;width:273.90px;height:13px;background:#a9c1e0;border-bottom:1px solid #c9d1e5;"></div><div style="left:0;top:102px;width:273.90px;height:13px;background:#a9c1e0;border-bottom:1px solid #c9d1e5;"></div><div style="left:0;top:115px;width:273.90px;height:13px;background:#a9c1e0;border-bottom:1px solid #c9d1e5;"></div><div style="left:0;top:128px;width:273.90px;height:12px;background:#a9c1e0;border-bottom:1px solid #c9d1e5;"></div><div style="left:0;top:140px;width:273.90px;height:13px;background:#a9c1e0;border-bottom:1px solid #c9d1e5;"></div><div style="left:0;top:153px;width:273.90px;height:13px;background:#c6e4ea;border-bottom:1px solid #c9d1e5;"></div><div style="left:0;top:166px;width:273.90px;height:13px;background:#c6e4ea;border-bottom:1px solid #c9d1e5;"></div><div style="left:0;top:179px;width:273.90px;height:13px;background:#c6e4ea;border-bottom:1px solid #c9d1e5;"></div><div style="left:0;top:192px;width:273.90px;height:12px;background:#c6e4ea;border-bottom:1px solid #c9d1e5;"></div><div style="left:0;top:204px;width:273.90px;height:13px;background:#c6e4ea;border-bottom:1px solid #c9d1e5;"></div><div style="left:0;top:217px;width:273.90px;height:13px;background:#c6e4ea;border-bottom:1px solid #c9d1e5;"></div><div style="left:0;top:230px;width:273.90px;height:13px;background:#c6e4ea;border-bottom:1px solid #c9d1e5;"></div><div style="left:0;top:243px;width:273.90px;height:12px;background:#c6e4ea;border-bottom:1px solid #c9d1e5;"></div><div style="left:0;top:255px;width:273.90px;height:13px;background:#c6e4ea;border-bottom:1px solid #c9d1e5;"></div><div style="left:0;top:268px;width:273.90px;height:13px;background:#c6e4ea;border-bottom:1px solid #c9d1e5;"></div><div style="left:0;top:281px;width:273.90px;height:13px;background:#c6e4ea;border-bottom:1px solid #c9d1e5;"></div><div style="left:0;top:294px;width:273.90px;height:13px;background:#c6e4ea;border-bottom:1px solid #c9d1e5;"></div><div style="left:38.20px;top:0;width:1px;height:303px;background:#c9d1e5;"></div><div style="left:77.50px;top:0;width:1px;height:303px;background:#c9d1e5;"></div><div style="left:116.40px;top:0;width:1px;height:303px;background:#c9d1e5;"></div><div style="left:155.80px;top:0;width:1px;height:303px;background:#c9d1e5;"></div><div style="left:194.70px;top:0;width:1px;height:303px;background:#c9d1e5;"></div><div style="left:233.60px;top:0;width:1px;height:303px;background:#c9d1e5;"></div><span class="t" style="right:247.10px;top:1.09px;color:#df3a3c;">110.15</span><span class="t" style="right:207.80px;top:1.09px;">-37.39</span><span class="t" style="right:168.90px;top:1.09px;">-2.19</span><span class="t" style="right:247.10px;top:13.87px;color:#df3a3c;">103.50</span><span class="t" style="right:207.80px;top:13.87px;">-35.30</span><span class="t" style="right:168.90px;top:13.87px;">-2.21</span><span class="t" style="right:247.10px;top:26.65px;color:#df3a3c;">96.95</span><span class="t" style="right:207.80px;top:26.65px;">-33.29</span><span class="t" style="right:168.90px;top:26.65px;">-2.22</span><span class="t" style="right:247.10px;top:39.43px;color:#df3a3c;">91.20</span><span class="t" style="right:207.80px;top:39.43px;">-31.41</span><span class="t" style="right:168.90px;top:39.43px;">-2.22</span><span class="t" style="right:247.10px;top:52.21px;color:#df3a3c;">85.50</span><span class="t" style="right:207.80px;top:52.21px;">-29.61</span><span class="t" style="right:168.90px;top:52.21px;">-2.21</span><span class="t" style="right:247.10px;top:64.99px;color:#df3a3c;">80.30</span><span class="t" style="right:207.80px;top:64.99px;">-27.91</span><span class="t" style="right:168.90px;top:64.99px;">-2.20</span><span class="t" style="right:247.10px;top:77.77px;color:#df3a3c;">75.50</span><span class="t" style="right:207.80px;top:77.77px;">-26.32</span><span class="t" style="right:168.90px;top:77.77px;">-2.18</span><span class="t" style="right:247.10px;top:90.55px;color:#df3a3c;">71.05</span><span class="t" style="right:207.80px;top:90.55px;">-24.82</span><span class="t" style="right:168.90px;top:90.55px;">-2.16</span><span class="t" style="right:247.10px;top:103.33px;color:#df3a3c;">66.65</span><span class="t" style="right:207.80px;top:103.33px;">-23.37</span><span class="t" style="right:168.90px;top:103.33px;">-2.13</span><span class="t" style="right:247.10px;top:116.11px;color:#df3a3c;">62.75</span><span class="t" style="right:207.80px;top:116.11px;">-22.04</span><span class="t" style="right:168.90px;top:116.11px;">-2.10</span><span class="t" style="right:247.10px;top:128.89px;color:#df3a3c;">59.10</span><span class="t" style="right:207.80px;top:128.89px;">-20.78</span><span class="t" style="right:168.90px;top:128.89px;">-2.07</span><span class="t" style="right:247.10px;top:141.67px;color:#df3a3c;">55.50</span><span class="t" style="right:207.80px;top:141.67px;">-19.57</span><span class="t" style="right:168.90px;top:141.67px;">-2.03</span><span class="t" style="right:247.10px;top:154.45px;color:#df3a3c;">52.35</span><span class="t" style="right:207.80px;top:154.45px;">-18.46</span><span class="t" style="right:168.90px;top:154.45px;">-2.00</span><span class="t" style="right:247.10px;top:167.23px;color:#df3a3c;">49.20</span><span class="t" style="right:207.80px;top:167.23px;">-17.39</span><span class="t" style="right:168.90px;top:167.23px;">-1.96</span><span class="t" style="right:247.10px;top:180.01px;color:#df3a3c;">46.30</span><span class="t" style="right:207.80px;top:180.01px;">-16.38</span><span class="t" style="right:168.90px;top:180.01px;">-1.91</span><span class="t" style="right:247.10px;top:192.79px;color:#df3a3c;">43.65</span><span class="t" style="right:207.80px;top:192.79px;">-15.45</span><span class="t" style="right:168.90px;top:192.79px;">-1.87</span><span class="t" style="right:247.10px;top:205.57px;color:#df3a3c;">41.00</span><span class="t" style="right:207.80px;top:205.57px;">-14.54</span><span class="t" style="right:168.90px;top:205.57px;">-1.83</span><span class="t" style="right:247.10px;top:218.35px;color:#df3a3c;">38.75</span><span class="t" style="right:207.80px;top:218.35px;">-13.72</span><span class="t" style="right:168.90px;top:218.35px;">-1.79</span><span class="t" style="right:247.10px;top:231.13px;color:#df3a3c;">36.50</span><span class="t" style="right:207.80px;top:231.13px;">-12.93</span><span class="t" style="right:168.90px;top:231.13px;">-1.74</span><span class="t" style="right:247.10px;top:243.91px;color:#df3a3c;">34.35</span><span class="t" style="right:207.80px;top:243.91px;">-12.18</span><span class="t" style="right:168.90px;top:243.91px;">-1.69</span><span class="t" style="right:247.10px;top:256.69px;color:#df3a3c;">32.55</span><span class="t" style="right:207.80px;top:256.69px;">-11.51</span><span class="t" style="right:168.90px;top:256.69px;">-1.65</span><span class="t" style="right:247.10px;top:269.47px;color:#df3a3c;">30.70</span><span class="t" style="right:207.80px;top:269.47px;">-10.86</span><span class="t" style="right:168.90px;top:269.47px;">-1.61</span><span class="t" style="right:247.10px;top:282.25px;color:#df3a3c;">29.00</span><span class="t" style="right:207.80px;top:282.25px;">-10.25</span><span class="t" style="right:168.90px;top:282.25px;">-1.57</span><span class="t" style="right:247.10px;top:295.03px;color:#df3a3c;">27.45</span><span class="t" style="right:207.80px;top:295.03px;">-9.68</span><span class="t" style="right:168.90px;top:295.03px;">-1.52</span></div>
<div style="left:148.20px;top:371.00px;width:37.60px;height:11.00px;background:#fdf0b4;"></div>
<div style="left:184.40px;top:372.00px;width:1.00px;height:9.00px;background:#111;"></div>
<div style="left:507.20px;top:197.00px;width:10.60px;height:86.00px;background:#d2d9ea;border-left:1px solid #c3cbdc;"></div>
<svg style="left:509.3px;top:201.0px" width="7" height="4" viewBox="0 0 7 4"><path d="M.2 3.7h6.4L3.4 .3Z" fill="#6e7485"/></svg>
<svg style="left:509.3px;top:275.0px" width="7" height="4" viewBox="0 0 7 4"><path d="M.2 .3h6.4L3.4 3.7Z" fill="#6e7485"/></svg>
<div style="left:509.40px;top:222.00px;width:6.40px;height:11.20px;background:#a9b1c6;"></div>
<div style="left:507.20px;top:306.00px;width:10.60px;height:302.00px;background:#d2d9ea;border-left:1px solid #c3cbdc;"></div>
<svg style="left:509.3px;top:310.0px" width="7" height="4" viewBox="0 0 7 4"><path d="M.2 3.7h6.4L3.4 .3Z" fill="#6e7485"/></svg>
<svg style="left:509.3px;top:600.0px" width="7" height="4" viewBox="0 0 7 4"><path d="M.2 .3h6.4L3.4 3.7Z" fill="#6e7485"/></svg>
<div style="left:509.40px;top:417.60px;width:6.40px;height:27.90px;background:#a9b1c6;"></div>
<div style="left:-5.00px;top:618.80px;width:67.00px;height:13.00px;background:#fff;border:1px solid #aab4c8;"></div>
<span class="t" style="right:1078.00px;top:619.60px;">All</span>
<svg style="left:54px;top:623.6px" width="6" height="4" viewBox="0 0 6 4"><path d="M.5 .5h4.6L2.8 3.3Z" fill="#4a5064"/></svg>
<div style="left:68.00px;top:618.80px;width:53.80px;height:13.00px;background:#fff;border:1px solid #aab4c8;"></div>
<span class="t" style="left:72.00px;top:619.60px;">Auto</span>
<svg style="left:113.2px;top:623.6px" width="6" height="4" viewBox="0 0 6 4"><path d="M.5 .5h4.6L2.8 3.3Z" fill="#4a5064"/></svg>
<div style="left:422.50px;top:620.50px;width:8.80px;height:8.80px;background:#fff;border:1px solid #9aa3b8;"></div>
<span class="t" style="left:434.40px;top:619.20px;letter-spacing:.22px;">Ignore Today's Trades</span>
<div style="left:-5.50px;top:634.30px;width:524.30px;height:40.00px;background:#fff;border:1px solid #aeb7cb;overflow:hidden;"></div>
<div style="left:0.00px;top:634.30px;width:518.80px;height:14.00px;background:#f3f6fb;border:1px solid #aeb7cb;border-bottom:1px solid #c3cbdc;border-left:none;"></div>
<span class="t c" style="left:-132.10px;top:636.10px;">Cost</span>
<span class="t c" style="left:-85.20px;top:636.10px;">Curr Cost</span>
<span class="t c" style="left:-38.10px;top:636.10px;">Commission</span>
<span class="t c" style="left:9.00px;top:636.10px;">PnL</span>
<span class="t c" style="left:56.00px;top:636.10px;">PnL%</span>
<span class="t c" style="left:103.25px;top:636.10px;">Delta</span>
<span class="t c" style="left:150.75px;top:636.10px;">Gamma</span>
<span class="t c" style="left:197.90px;top:636.10px;">Theta</span>
<span class="t c" style="left:244.80px;top:636.10px;">Vega</span>
<span class="t c" style="left:291.90px;top:636.10px;">T/D</span>
<span class="t c" style="left:342.15px;top:636.10px;">Plot</span>
<div style="left:40.80px;top:635.30px;width:1.00px;height:38.00px;background:#c3cbdc;"></div>
<div style="left:87.80px;top:635.30px;width:1.00px;height:38.00px;background:#c3cbdc;"></div>
<div style="left:135.00px;top:635.30px;width:1.00px;height:38.00px;background:#c3cbdc;"></div>
<div style="left:182.00px;top:635.30px;width:1.00px;height:38.00px;background:#c3cbdc;"></div>
<div style="left:229.00px;top:635.30px;width:1.00px;height:38.00px;background:#c3cbdc;"></div>
<div style="left:276.50px;top:635.30px;width:1.00px;height:38.00px;background:#c3cbdc;"></div>
<div style="left:324.00px;top:635.30px;width:1.00px;height:38.00px;background:#c3cbdc;"></div>
<div style="left:370.80px;top:635.30px;width:1.00px;height:38.00px;background:#c3cbdc;"></div>
<div style="left:417.80px;top:635.30px;width:1.00px;height:38.00px;background:#c3cbdc;"></div>
<div style="left:465.00px;top:635.30px;width:1.00px;height:38.00px;background:#c3cbdc;"></div>
<span class="t" style="right:1041.50px;top:649.60px;">2,630.60</span>
<span class="t" style="right:994.50px;top:649.60px;">-1,975.00</span>
<span class="t" style="right:947.30px;top:649.60px;">29.40</span>
<span class="t" style="right:900.30px;top:649.60px;color:#3d8e3f;">655.60</span>
<span class="t" style="right:853.30px;top:649.60px;color:#3d8e3f;">3.54%</span>
<span class="t" style="right:805.80px;top:649.60px;">7.45</span>
<span class="t" style="right:758.30px;top:649.60px;">-0.02</span>
<span class="t" style="right:711.50px;top:649.60px;">32.28</span>
<span class="t" style="right:664.50px;top:649.60px;">-154.40</span>
<span class="t" style="right:617.30px;top:649.60px;">4.3</span>
<div style="left:1.00px;top:660.80px;width:516.80px;height:1.00px;background:#c3cbdc;"></div>
<span class="t" style="right:1041.50px;top:662.60px;">2,044.20</span>
<span class="t" style="right:994.50px;top:662.60px;">-1,390.00</span>
<span class="t" style="right:947.30px;top:662.60px;">30.80</span>
<span class="t" style="right:900.30px;top:662.60px;color:#3d8e3f;">654.20</span>
<span class="t" style="right:853.30px;top:662.60px;color:#3d8e3f;">5.06%</span>
<span class="t" style="right:805.80px;top:662.60px;">5.62</span>
<span class="t" style="right:758.30px;top:662.60px;">-0.02</span>
<span class="t" style="right:711.50px;top:662.60px;">30.98</span>
<span class="t" style="right:664.50px;top:662.60px;">-136.23</span>
<span class="t" style="right:617.30px;top:662.60px;">5.5</span>
<svg style="left:488px;top:650.4px" width="9" height="9" viewBox="0 0 9 9"><rect x=".4" y=".4" width="8" height="8" fill="#fff" stroke="#9aa3b8" stroke-width=".8"/><path d="M2 4.4l1.8 1.9L6.8 2.2" fill="none" stroke="#3c4254" stroke-width=".9"/></svg>
<svg style="left:488px;top:663.4px" width="9" height="9" viewBox="0 0 9 9"><rect x=".4" y=".4" width="8" height="8" fill="#fff" stroke="#9aa3b8" stroke-width=".8"/><path d="M2 4.4l1.8 1.9L6.8 2.2" fill="none" stroke="#3c4254" stroke-width=".9"/></svg>
<div style="left:518.80px;top:109.00px;width:9.00px;height:566.00px;background:#d3d9ea;"></div>
<svg style="left:521.9px;top:386.5px" width="3" height="13" viewBox="0 0 3 13"><path d="M.3 .5l2.4 2M.3 2.5l2.4 -2M.3 3.5l2.4 2M.3 5.5l2.4 -2M.3 6.5l2.4 2M.3 8.5l2.4 -2M.3 9.5l2.4 2M.3 11.5l2.4 -2" stroke="#aab2c6" stroke-width=".6" fill="none"/></svg>
<div style="left:527.50px;top:109.00px;width:553.00px;height:548.00px;background:#d5dbec;border-left:1px solid #c5cde0;"></div>
<div style="left:527.50px;top:128.00px;width:553.00px;height:1.00px;background:#b1bace;"></div>
<div style="left:527.50px;top:111.00px;width:52.20px;height:18.00px;background:#d5dbec;border:1px solid #aab3c8;border-bottom:none;"></div>
<span class="t c" style="left:403.60px;top:113.60px;">Risk Chart</span>
<div style="left:578.70px;top:111.00px;width:56.00px;height:18.00px;background:#cad1e4;border:1px solid #aab3c8;"></div>
<span class="t c" style="left:456.70px;top:113.60px;">Price Chart</span>
<div style="left:633.70px;top:111.00px;width:84.70px;height:18.00px;background:#cad1e4;border:1px solid #aab3c8;"></div>
<span class="t c" style="left:526.05px;top:113.60px;">Movement Analysis</span>
<div style="left:717.40px;top:111.00px;width:46.20px;height:18.00px;background:#cad1e4;border:1px solid #aab3c8;"></div>
<span class="t c" style="left:590.50px;top:113.60px;">Volatility</span>
<div style="left:762.60px;top:111.00px;width:109.00px;height:18.00px;background:#cad1e4;border:1px solid #aab3c8;"></div>
<span class="t c" style="left:667.10px;top:113.60px;">Statistics &amp; Fundamentals</span>
<span class="t" style="left:532.60px;top:131.80px;">Vol Adjust</span>
<div style="left:573.30px;top:130.80px;width:35.00px;height:13.00px;background:#fff;border:1px solid #aab4c8;"></div>
<span class="t" style="right:485.80px;top:131.80px;">0</span>
<svg style="left:600.6px;top:132.6px" width="6" height="10" viewBox="0 0 6 10"><path d="M.6 3.6h4.6L2.9 .8ZM.6 6.2h4.6L2.9 9Z" fill="#4a5064"/></svg>
<span class="t" style="right:23.60px;top:131.80px;">Projection</span>
<div style="left:1060.60px;top:131.40px;width:30.00px;height:12.80px;background:#fff;border:1px solid #aab4c8;"></div>
<span class="t" style="left:1063.00px;top:131.80px;">18/11/2025</span>
<svg style="left:528px;top:145px" width="552" height="512" viewBox="528 145 552 512" font-family="Liberation Sans,sans-serif" font-size="7.5"><rect x="528" y="145.8" width="552" height="511" fill="#fff"/><rect x="786.4" y="158.7" width="186.4" height="357.7" fill="#92cddc"/><rect x="833.0" y="158.7" width="93.2" height="357.7" fill="#4f81bd"/><path d="M595.1 158.7V516.4M633.3 158.7V516.4M671.5 158.7V516.4M709.7 158.7V516.4M747.9 158.7V516.4M786.1 158.7V516.4M824.3 158.7V516.4M862.5 158.7V516.4M900.7 158.7V516.4M938.9 158.7V516.4M977.1 158.7V516.4M1015.3 158.7V516.4M1053.5 158.7V516.4M565.5 158.7H1080M565.5 178.6H1080M565.5 198.4H1080M565.5 218.3H1080M565.5 238.2H1080M565.5 258.1H1080M565.5 277.9H1080M565.5 297.8H1080M565.5 317.7H1080M565.5 337.5H1080M565.5 357.4H1080M565.5 377.3H1080M565.5 397.1H1080M565.5 417.0H1080M565.5 436.9H1080M565.5 456.8H1080M565.5 476.6H1080M565.5 496.5H1080M565.5 516.4H1080" stroke="#dedede" stroke-opacity=".85" stroke-width="1" fill="none"/><path d="M565.5 158.7V516.4" stroke="#d0d0d0" stroke-width="1" fill="none"/><text transform="translate(794.4 161.2) rotate(-90)" text-anchor="end" font-size="7.1" fill="#5b8ec6">6550.42</text><text transform="translate(841.0 161.2) rotate(-90)" text-anchor="end" font-size="7.1" fill="#8eb4e2">6611.42</text><text transform="translate(925.2 161.2) rotate(-90)" text-anchor="end" font-size="7.1" fill="#8eb4e2">6733.40</text><text transform="translate(971.6 161.2) rotate(-90)" text-anchor="end" font-size="7.1" fill="#5b8ec6">6794.40</text><path d="M565.5 357.2H1080" stroke="#8c8c8c" stroke-width="2" fill="none"/><path d="M565.5 387.2L637 375.3" stroke="#f26a6a" stroke-width="1.25" fill="none"/><path d="M637 375.3L725 362.6L780 357.5L857.8 350.3L1080 340.6" stroke="#86d486" stroke-width="1.1" fill="none"/><path d="M565.5 395.8L671.7 375.3" stroke="#f26a6a" stroke-width="1.25" fill="none"/><path d="M671.7 375.3L725 366.1L780 358.9L857.8 351.6L900 346.4L1080 335.3" stroke="#94b4f2" stroke-width="1.1" fill="none"/><path d="M565.5 504.1H595.1L709.7 206.3L728.8 182L786.1 330.2H1080" stroke="#4a4ad2" stroke-width="1.45" fill="none" stroke-linejoin="round"/><path d="M565.5 484.7H595.1L709.7 187.6H728.8L786.1 336.1H1080" stroke="#158a15" stroke-width="1.75" fill="none" stroke-linejoin="round"/><path d="M645.3 158.7V516.4" stroke="#b44ab4" stroke-width="1" stroke-dasharray="3 3" fill="none"/><text transform="translate(645.2 514.4) rotate(-90)" text-anchor="start" font-size="7.5" fill="#b030b0">6365.19</text><rect x="844.4" y="347.2" width="22.4" height="6.4" fill="#d9a07a" fill-opacity=".8" transform="rotate(-5 857.8 350.3)"/><circle cx="857.8" cy="350.3" r="2.9" fill="#38e4f2" stroke="#1e2c3c" stroke-width=".9"/><rect x="568.7" y="161.3" width="111.1" height="75.5" rx="3.2" fill="#e9eef6" fill-opacity=".95" stroke="#9ca6b4" stroke-width=".9"/><rect x="574.2" y="167.4" width="2.4" height="8.8" fill="#e2404e"/><text x="577.3" y="174.4" fill="#555">-194.40 Realized PnL</text><rect x="574.2" y="176.8" width="2.4" height="8.8" fill="#3ea83e"/><text x="577.3" y="183.8" fill="#555" style="white-space:pre">+1<tspan fill="#5c5cf0"> 19dic. 6475 Put Δ   -31.32</tspan></text><rect x="574.2" y="186.3" width="2.4" height="8.8" fill="#3ea83e"/><text x="577.3" y="193.3" fill="#555" style="white-space:pre">-1<tspan fill="#f05c5c"> 19dic. 6450 Put Δ   -29.49</tspan></text><rect x="574.2" y="195.7" width="2.4" height="8.8" fill="#7a8cec"/><text x="577.3" y="202.7" fill="#555" style="white-space:pre">+2<tspan fill="#5c5cf0"> 19dic. 6550 Put Δ   -37.33</tspan></text><rect x="574.2" y="205.2" width="2.4" height="8.8" fill="#7a8cec"/><text x="577.3" y="212.2" fill="#555" style="white-space:pre">+2<tspan fill="#5c5cf0"> 19dic. 6300 Put Δ   -20.67</tspan></text><rect x="574.2" y="214.6" width="2.4" height="8.8" fill="#7a8cec"/><text x="577.3" y="221.6" fill="#555" style="white-space:pre">-3<tspan fill="#f05c5c"> 19dic. 6475 Put Δ   -31.32</tspan></text><rect x="574.2" y="224.1" width="2.4" height="8.8" fill="#7a8cec"/><text x="577.3" y="231.1" fill="#555" style="white-space:pre">-1<tspan fill="#f05c5c"> 19dic. 6450 Put Δ   -29.49</tspan></text><rect x="568.6" y="484" width="62.2" height="28.2" rx="3.2" fill="#e9eef6" fill-opacity=".86" stroke="#9ca6b4" stroke-width=".9"/><text x="574.5" y="496.6" fill="#5fae4e">19/12/2025 (0)</text><text x="574.5" y="505.4" fill="#93d684">18/11/2025 (31)</text><text x="605" y="510.5" fill="#b030b0" text-anchor="middle">23.9%</text><text x="897" y="510.5" fill="#6a2c9c" text-anchor="middle">76.1%</text><text x="560.8" y="161.6" text-anchor="end" fill="#333">108%</text><text x="560.8" y="181.5" text-anchor="end" fill="#333">97%</text><text x="560.8" y="201.3" text-anchor="end" fill="#333">86%</text><text x="560.8" y="221.2" text-anchor="end" fill="#333">75%</text><text x="560.8" y="241.1" text-anchor="end" fill="#333">65%</text><text x="560.8" y="260.9" text-anchor="end" fill="#333">54%</text><text x="560.8" y="280.8" text-anchor="end" fill="#333">43%</text><text x="560.8" y="300.7" text-anchor="end" fill="#333">32%</text><text x="560.8" y="320.6" text-anchor="end" fill="#333">22%</text><text x="560.8" y="340.4" text-anchor="end" fill="#333">11%</text><text x="560.8" y="360.3" text-anchor="end" fill="#333">0%</text><text x="560.8" y="380.2" text-anchor="end" fill="#333">-11%</text><text x="560.8" y="400.0" text-anchor="end" fill="#333">-22%</text><text x="560.8" y="419.9" text-anchor="end" fill="#333">-32%</text><text x="560.8" y="439.8" text-anchor="end" fill="#333">-43%</text><text x="560.8" y="459.6" text-anchor="end" fill="#333">-54%</text><text x="560.8" y="479.5" text-anchor="end" fill="#333">-65%</text><text x="560.8" y="499.4" text-anchor="end" fill="#333">-75%</text><text x="560.8" y="519.3" text-anchor="end" fill="#333">-86%</text><rect x="532.4" y="345.7" width="29.8" height="8.8" fill="#008000"/><text x="561" y="353" text-anchor="end" fill="#fff" font-weight="bold">4%</text><text x="595.7" y="154.1" text-anchor="middle" fill="#333">-5.6%</text><text x="595.9" y="527.2" text-anchor="middle" fill="#333">6300</text><text x="633.9" y="154.1" text-anchor="middle" fill="#333">-4.8%</text><text x="634.1" y="527.2" text-anchor="middle" fill="#333">6350</text><text x="672.1" y="154.1" text-anchor="middle" fill="#333">-4.1%</text><text x="672.3" y="527.2" text-anchor="middle" fill="#333">6400</text><text x="710.3" y="154.1" text-anchor="middle" fill="#333">-3.3%</text><text x="710.5" y="527.2" text-anchor="middle" fill="#333">6450</text><text x="748.5" y="154.1" text-anchor="middle" fill="#333">-2.6%</text><text x="748.7" y="527.2" text-anchor="middle" fill="#333">6500</text><text x="786.7" y="154.1" text-anchor="middle" fill="#333">-1.8%</text><text x="786.9" y="527.2" text-anchor="middle" fill="#333">6550</text><text x="824.9" y="154.1" text-anchor="middle" fill="#333">-1.1%</text><text x="825.1" y="527.2" text-anchor="middle" fill="#333">6600</text><text x="863.1" y="154.1" text-anchor="middle" fill="#333">-0.3%</text><text x="901.3" y="154.1" text-anchor="middle" fill="#333">0.4%</text><text x="901.5" y="527.2" text-anchor="middle" fill="#333">6700</text><text x="939.5" y="154.1" text-anchor="middle" fill="#333">1.2%</text><text x="939.7" y="527.2" text-anchor="middle" fill="#333">6750</text><text x="977.7" y="154.1" text-anchor="middle" fill="#333">1.9%</text><text x="977.9" y="527.2" text-anchor="middle" fill="#333">6800</text><text x="1015.9" y="154.1" text-anchor="middle" fill="#333">2.7%</text><text x="1016.1" y="527.2" text-anchor="middle" fill="#333">6850</text><text x="1054.1" y="154.1" text-anchor="middle" fill="#333">3.4%</text><text x="1054.3" y="527.2" text-anchor="middle" fill="#333">6900</text><rect x="846.6" y="146.3" width="22" height="8.8" fill="#fff" stroke="#5a6474" stroke-width=".8"/><text x="857.6" y="154.1" text-anchor="middle" fill="#333">-0.4%</text><rect x="530.9" y="529.7" width="570" height="123.9" rx="3.2" fill="#e8eff8" stroke="#8a96a8" stroke-width=".9"/><text x="548.6" y="552.1" text-anchor="middle" fill="#5a5a5a">PnL</text><text x="548.6" y="580.0" text-anchor="middle" fill="#5a5a5a">Delta</text><text x="548.6" y="601.8" text-anchor="middle" fill="#5a5a5a">Gamma</text><text x="548.6" y="622.9" text-anchor="middle" fill="#5a5a5a">Theta</text><text x="548.6" y="645.0" text-anchor="middle" fill="#5a5a5a">Vega</text><rect x="566.0" y="548.6" width="49.4" height="6.8" fill="#f27c7c" stroke="#3a3f4c" stroke-opacity=".75" stroke-width=".7"/><text x="595.7" y="541.4" text-anchor="middle" fill="#f06464">-14%</text><text x="595.7" y="548.5" text-anchor="middle" fill="#f06464">-2522</text><rect x="566.0" y="570.3" width="49.4" height="6.7" fill="#5878f2" stroke="#3a3f4c" stroke-opacity=".75" stroke-width=".7"/><text x="595.7" y="584.2" text-anchor="middle" fill="#6674f2">12.93</text><rect x="566.0" y="598.6" width="49.4" height="6.9" fill="#f27c7c" stroke="#3a3f4c" stroke-opacity=".75" stroke-width=".7"/><text x="595.7" y="598.3" text-anchor="middle" fill="#f06464">-0.02</text><rect x="566.0" y="620.0" width="49.4" height="3.3" fill="#f27c7c" stroke="#3a3f4c" stroke-opacity=".75" stroke-width=".7"/><text x="595.7" y="620.1" text-anchor="middle" fill="#f06464">-15.51</text><rect x="566.0" y="641.2" width="49.4" height="3.6" fill="#f27c7c" stroke="#3a3f4c" stroke-opacity=".75" stroke-width=".7"/><text x="595.7" y="641.1" text-anchor="middle" fill="#f06464">-75.15</text><rect x="615.4" y="548.6" width="38.1" height="5.1" fill="#f27c7c" stroke="#3a3f4c" stroke-opacity=".75" stroke-width=".7"/><text x="633.9" y="541.4" text-anchor="middle" fill="#f06464">-10%</text><text x="633.9" y="548.5" text-anchor="middle" fill="#f06464">-1900</text><rect x="615.4" y="570.8" width="38.1" height="6.2" fill="#5878f2" stroke="#3a3f4c" stroke-opacity=".75" stroke-width=".7"/><text x="633.9" y="584.2" text-anchor="middle" fill="#6674f2">11.93</text><rect x="615.4" y="598.6" width="38.1" height="6.9" fill="#f27c7c" stroke="#3a3f4c" stroke-opacity=".75" stroke-width=".7"/><text x="633.9" y="598.3" text-anchor="middle" fill="#f06464">-0.02</text><rect x="615.4" y="620.0" width="38.1" height="0.7" fill="#f27c7c" stroke="#3a3f4c" stroke-opacity=".75" stroke-width=".7"/><text x="633.9" y="620.1" text-anchor="middle" fill="#f06464">-3.21</text><rect x="615.4" y="641.2" width="38.1" height="4.8" fill="#f27c7c" stroke="#3a3f4c" stroke-opacity=".75" stroke-width=".7"/><text x="633.9" y="641.1" text-anchor="middle" fill="#f06464">-100.41</text><rect x="653.5" y="548.6" width="38.1" height="3.6" fill="#f27c7c" stroke="#3a3f4c" stroke-opacity=".75" stroke-width=".7"/><text x="672.1" y="541.4" text-anchor="middle" fill="#f06464">-7%</text><text x="672.1" y="548.5" text-anchor="middle" fill="#f06464">-1331</text><rect x="653.5" y="571.4" width="38.1" height="5.6" fill="#5878f2" stroke="#3a3f4c" stroke-opacity=".75" stroke-width=".7"/><text x="672.1" y="584.2" text-anchor="middle" fill="#6674f2">10.84</text><rect x="653.5" y="598.6" width="38.1" height="6.9" fill="#f27c7c" stroke="#3a3f4c" stroke-opacity=".75" stroke-width=".7"/><text x="672.1" y="598.3" text-anchor="middle" fill="#f06464">-0.02</text><rect x="653.5" y="618.4" width="38.1" height="1.6" fill="#5878f2" stroke="#3a3f4c" stroke-opacity=".75" stroke-width=".7"/><text x="672.1" y="627.3" text-anchor="middle" fill="#6674f2">7.37</text><rect x="653.5" y="641.2" width="38.1" height="5.7" fill="#f27c7c" stroke="#3a3f4c" stroke-opacity=".75" stroke-width=".7"/><text x="672.1" y="641.1" text-anchor="middle" fill="#f06464">-119.92</text><rect x="691.6" y="548.6" width="38.1" height="2.2" fill="#f27c7c" stroke="#3a3f4c" stroke-opacity=".75" stroke-width=".7"/><text x="710.3" y="541.4" text-anchor="middle" fill="#f06464">-4%</text><text x="710.3" y="548.5" text-anchor="middle" fill="#f06464">-817</text><rect x="691.6" y="571.9" width="38.1" height="5.1" fill="#5878f2" stroke="#3a3f4c" stroke-opacity=".75" stroke-width=".7"/><text x="710.3" y="584.2" text-anchor="middle" fill="#6674f2">9.72</text><rect x="691.6" y="598.6" width="38.1" height="6.9" fill="#f27c7c" stroke="#3a3f4c" stroke-opacity=".75" stroke-width=".7"/><text x="710.3" y="598.3" text-anchor="middle" fill="#f06464">-0.02</text><rect x="691.6" y="616.6" width="38.1" height="3.4" fill="#5878f2" stroke="#3a3f4c" stroke-opacity=".75" stroke-width=".7"/><text x="710.3" y="627.3" text-anchor="middle" fill="#6674f2">15.99</text><rect x="691.6" y="641.2" width="38.1" height="6.3" fill="#f27c7c" stroke="#3a3f4c" stroke-opacity=".75" stroke-width=".7"/><text x="710.3" y="641.1" text-anchor="middle" fill="#f06464">-133.45</text><rect x="729.7" y="548.6" width="38.1" height="1.0" fill="#f27c7c" stroke="#3a3f4c" stroke-opacity=".75" stroke-width=".7"/><text x="748.5" y="541.4" text-anchor="middle" fill="#f06464">-2%</text><text x="748.5" y="548.5" text-anchor="middle" fill="#f06464">-359</text><rect x="729.7" y="572.5" width="38.1" height="4.5" fill="#5878f2" stroke="#3a3f4c" stroke-opacity=".75" stroke-width=".7"/><text x="748.5" y="584.2" text-anchor="middle" fill="#6674f2">8.59</text><rect x="729.7" y="598.6" width="38.1" height="6.9" fill="#f27c7c" stroke="#3a3f4c" stroke-opacity=".75" stroke-width=".7"/><text x="748.5" y="598.3" text-anchor="middle" fill="#f06464">-0.02</text><rect x="729.7" y="615.2" width="38.1" height="4.8" fill="#5878f2" stroke="#3a3f4c" stroke-opacity=".75" stroke-width=".7"/><text x="748.5" y="627.3" text-anchor="middle" fill="#6674f2">22.57</text><rect x="729.7" y="641.2" width="38.1" height="6.7" fill="#f27c7c" stroke="#3a3f4c" stroke-opacity=".75" stroke-width=".7"/><text x="748.5" y="641.1" text-anchor="middle" fill="#f06464">-141.15</text><rect x="767.8" y="548.2" width="38.1" height="0.3" fill="#5878f2" stroke="#3a3f4c" stroke-opacity=".75" stroke-width=".7"/><text x="786.7" y="555.6" text-anchor="middle" fill="#6674f2">43</text><text x="786.7" y="562.6" text-anchor="middle" fill="#6674f2">0%</text><rect x="767.8" y="573.1" width="38.1" height="3.9" fill="#5878f2" stroke="#3a3f4c" stroke-opacity=".75" stroke-width=".7"/><text x="786.7" y="584.2" text-anchor="middle" fill="#6674f2">7.50</text><rect x="767.8" y="598.6" width="38.1" height="6.9" fill="#f27c7c" stroke="#3a3f4c" stroke-opacity=".75" stroke-width=".7"/><text x="786.7" y="598.3" text-anchor="middle" fill="#f06464">-0.02</text><rect x="767.8" y="614.2" width="38.1" height="5.8" fill="#5878f2" stroke="#3a3f4c" stroke-opacity=".75" stroke-width=".7"/><text x="786.7" y="627.3" text-anchor="middle" fill="#6674f2">27.15</text><rect x="767.8" y="641.2" width="38.1" height="6.8" fill="#f27c7c" stroke="#3a3f4c" stroke-opacity=".75" stroke-width=".7"/><text x="786.7" y="641.1" text-anchor="middle" fill="#f06464">-143.51</text><rect x="805.9" y="547.5" width="38.1" height="1.1" fill="#5878f2" stroke="#3a3f4c" stroke-opacity=".75" stroke-width=".7"/><text x="824.9" y="555.6" text-anchor="middle" fill="#6674f2">392</text><text x="824.9" y="562.6" text-anchor="middle" fill="#6674f2">2%</text><rect x="805.9" y="573.6" width="38.1" height="3.4" fill="#5878f2" stroke="#3a3f4c" stroke-opacity=".75" stroke-width=".7"/><text x="824.9" y="584.2" text-anchor="middle" fill="#6674f2">6.46</text><rect x="805.9" y="598.6" width="38.1" height="6.9" fill="#f27c7c" stroke="#3a3f4c" stroke-opacity=".75" stroke-width=".7"/><text x="824.9" y="598.3" text-anchor="middle" fill="#f06464">-0.02</text><rect x="805.9" y="613.6" width="38.1" height="6.4" fill="#5878f2" stroke="#3a3f4c" stroke-opacity=".75" stroke-width=".7"/><text x="824.9" y="627.3" text-anchor="middle" fill="#6674f2">29.90</text><rect x="805.9" y="641.2" width="38.1" height="6.7" fill="#f27c7c" stroke="#3a3f4c" stroke-opacity=".75" stroke-width=".7"/><text x="824.9" y="641.1" text-anchor="middle" fill="#f06464">-141.26</text><rect x="844.0" y="546.8" width="38.1" height="1.8" fill="#5878f2" stroke="#3a3f4c" stroke-opacity=".75" stroke-width=".7"/><rect x="844.0" y="574.1" width="38.1" height="2.9" fill="#5878f2" stroke="#3a3f4c" stroke-opacity=".75" stroke-width=".7"/><rect x="844.0" y="598.6" width="38.1" height="6.9" fill="#f27c7c" stroke="#3a3f4c" stroke-opacity=".75" stroke-width=".7"/><rect x="844.0" y="613.4" width="38.1" height="6.6" fill="#5878f2" stroke="#3a3f4c" stroke-opacity=".75" stroke-width=".7"/><rect x="844.0" y="641.2" width="38.1" height="6.4" fill="#f27c7c" stroke="#3a3f4c" stroke-opacity=".75" stroke-width=".7"/><rect x="882.1" y="546.1" width="38.1" height="2.5" fill="#5878f2" stroke="#3a3f4c" stroke-opacity=".75" stroke-width=".7"/><text x="901.3" y="555.6" text-anchor="middle" fill="#6674f2">943</text><text x="901.3" y="562.6" text-anchor="middle" fill="#6674f2">5%</text><rect x="882.1" y="574.6" width="38.1" height="2.4" fill="#5878f2" stroke="#3a3f4c" stroke-opacity=".75" stroke-width=".7"/><text x="901.3" y="584.2" text-anchor="middle" fill="#6674f2">4.63</text><rect x="882.1" y="598.6" width="38.1" height="6.9" fill="#f27c7c" stroke="#3a3f4c" stroke-opacity=".75" stroke-width=".7"/><text x="901.3" y="598.3" text-anchor="middle" fill="#f06464">-0.02</text><rect x="882.1" y="613.4" width="38.1" height="6.6" fill="#5878f2" stroke="#3a3f4c" stroke-opacity=".75" stroke-width=".7"/><text x="901.3" y="627.3" text-anchor="middle" fill="#6674f2">30.86</text><rect x="882.1" y="641.2" width="38.1" height="6.0" fill="#f27c7c" stroke="#3a3f4c" stroke-opacity=".75" stroke-width=".7"/><text x="901.3" y="641.1" text-anchor="middle" fill="#f06464">-126.48</text><rect x="920.2" y="545.5" width="38.1" height="3.1" fill="#5878f2" stroke="#3a3f4c" stroke-opacity=".75" stroke-width=".7"/><text x="939.5" y="555.6" text-anchor="middle" fill="#6674f2">1155</text><text x="939.5" y="562.6" text-anchor="middle" fill="#6674f2">6%</text><rect x="920.2" y="575.0" width="38.1" height="2.0" fill="#5878f2" stroke="#3a3f4c" stroke-opacity=".75" stroke-width=".7"/><text x="939.5" y="584.2" text-anchor="middle" fill="#6674f2">3.86</text><rect x="920.2" y="598.6" width="38.1" height="2.9" fill="#f27c7c" stroke="#3a3f4c" stroke-opacity=".75" stroke-width=".7"/><text x="939.5" y="598.3" text-anchor="middle" fill="#f06464">-0.01</text><rect x="920.2" y="613.7" width="38.1" height="6.3" fill="#5878f2" stroke="#3a3f4c" stroke-opacity=".75" stroke-width=".7"/><text x="939.5" y="627.3" text-anchor="middle" fill="#6674f2">29.64</text><rect x="920.2" y="641.2" width="38.1" height="5.5" fill="#f27c7c" stroke="#3a3f4c" stroke-opacity=".75" stroke-width=".7"/><text x="939.5" y="641.1" text-anchor="middle" fill="#f06464">-115.77</text><rect x="958.3" y="545.0" width="38.1" height="3.6" fill="#5878f2" stroke="#3a3f4c" stroke-opacity=".75" stroke-width=".7"/><text x="977.7" y="555.6" text-anchor="middle" fill="#6674f2">1331</text><text x="977.7" y="562.6" text-anchor="middle" fill="#6674f2">7%</text><rect x="958.3" y="575.3" width="38.1" height="1.7" fill="#5878f2" stroke="#3a3f4c" stroke-opacity=".75" stroke-width=".7"/><text x="977.7" y="584.2" text-anchor="middle" fill="#6674f2">3.19</text><rect x="958.3" y="598.6" width="38.1" height="2.9" fill="#f27c7c" stroke="#3a3f4c" stroke-opacity=".75" stroke-width=".7"/><text x="977.7" y="598.3" text-anchor="middle" fill="#f06464">-0.01</text><rect x="958.3" y="614.1" width="38.1" height="5.9" fill="#5878f2" stroke="#3a3f4c" stroke-opacity=".75" stroke-width=".7"/><text x="977.7" y="627.3" text-anchor="middle" fill="#6674f2">27.67</text><rect x="958.3" y="641.2" width="38.1" height="4.9" fill="#f27c7c" stroke="#3a3f4c" stroke-opacity=".75" stroke-width=".7"/><text x="977.7" y="641.1" text-anchor="middle" fill="#f06464">-103.99</text><rect x="996.4" y="544.6" width="38.1" height="4.0" fill="#5878f2" stroke="#3a3f4c" stroke-opacity=".75" stroke-width=".7"/><text x="1015.9" y="555.6" text-anchor="middle" fill="#6674f2">1476</text><text x="1015.9" y="562.6" text-anchor="middle" fill="#6674f2">8%</text><rect x="996.4" y="575.6" width="38.1" height="1.4" fill="#5878f2" stroke="#3a3f4c" stroke-opacity=".75" stroke-width=".7"/><text x="1015.9" y="584.2" text-anchor="middle" fill="#6674f2">2.61</text><rect x="996.4" y="598.6" width="38.1" height="2.9" fill="#f27c7c" stroke="#3a3f4c" stroke-opacity=".75" stroke-width=".7"/><text x="1015.9" y="598.3" text-anchor="middle" fill="#f06464">-0.01</text><rect x="996.4" y="614.6" width="38.1" height="5.4" fill="#5878f2" stroke="#3a3f4c" stroke-opacity=".75" stroke-width=".7"/><text x="1015.9" y="627.3" text-anchor="middle" fill="#6674f2">25.21</text><rect x="996.4" y="641.2" width="38.1" height="4.4" fill="#f27c7c" stroke="#3a3f4c" stroke-opacity=".75" stroke-width=".7"/><text x="1015.9" y="641.1" text-anchor="middle" fill="#f06464">-91.84</text><rect x="1034.5" y="544.3" width="38.1" height="4.3" fill="#5878f2" stroke="#3a3f4c" stroke-opacity=".75" stroke-width=".7"/><text x="1054.1" y="555.6" text-anchor="middle" fill="#6674f2">1594</text><text x="1054.1" y="562.6" text-anchor="middle" fill="#6674f2">9%</text><rect x="1034.5" y="575.9" width="38.1" height="1.1" fill="#5878f2" stroke="#3a3f4c" stroke-opacity=".75" stroke-width=".7"/><text x="1054.1" y="584.2" text-anchor="middle" fill="#6674f2">2.12</text><rect x="1034.5" y="598.6" width="38.1" height="2.9" fill="#f27c7c" stroke="#3a3f4c" stroke-opacity=".75" stroke-width=".7"/><text x="1054.1" y="598.3" text-anchor="middle" fill="#f06464">-0.01</text><rect x="1034.5" y="615.2" width="38.1" height="4.8" fill="#5878f2" stroke="#3a3f4c" stroke-opacity=".75" stroke-width=".7"/><text x="1054.1" y="627.3" text-anchor="middle" fill="#6674f2">22.49</text><rect x="1034.5" y="641.2" width="38.1" height="3.8" fill="#f27c7c" stroke="#3a3f4c" stroke-opacity=".75" stroke-width=".7"/><text x="1054.1" y="641.1" text-anchor="middle" fill="#f06464">-79.88</text><rect x="1072.6" y="544.0" width="11.4" height="4.6" fill="#5878f2" stroke="#3a3f4c" stroke-opacity=".75" stroke-width=".7"/><rect x="1072.6" y="576.1" width="11.4" height="0.9" fill="#5878f2" stroke="#3a3f4c" stroke-opacity=".75" stroke-width=".7"/><rect x="1072.6" y="598.6" width="11.4" height="2.9" fill="#f27c7c" stroke="#3a3f4c" stroke-opacity=".75" stroke-width=".7"/><rect x="1072.6" y="615.8" width="11.4" height="4.2" fill="#5878f2" stroke="#3a3f4c" stroke-opacity=".75" stroke-width=".7"/><rect x="1072.6" y="641.2" width="11.4" height="3.3" fill="#f27c7c" stroke="#3a3f4c" stroke-opacity=".75" stroke-width=".7"/><rect x="840.5" y="519.4" width="33.5" height="134.2" rx="3.2" fill="#e9f0f8" fill-opacity=".9" stroke="#7c8a9c" stroke-width=".9"/><text x="857.4" y="527.1" text-anchor="middle" fill="#333" stroke="#333" stroke-width="0">6643.51</text><text x="857.4" y="548.7" text-anchor="middle" fill="#3636f0" stroke="#3636f0" stroke-width=".25">654</text><text x="857.4" y="559.3" text-anchor="middle" fill="#3636f0" stroke="#3636f0" stroke-width=".25">3.5%</text><text x="857.4" y="580.7" text-anchor="middle" fill="#3636f0" stroke="#3636f0" stroke-width=".25">5.62</text><text x="857.4" y="602.7" text-anchor="middle" fill="#f03434" stroke="#f03434" stroke-width=".25">-0.02</text><text x="857.4" y="623.6" text-anchor="middle" fill="#3636f0" stroke="#3636f0" stroke-width=".25">30.98</text><text x="857.4" y="645.7" text-anchor="middle" fill="#f03434" stroke="#f03434" stroke-width=".25">-136.23</text></svg>
<div style="left:527.80px;top:656.70px;width:553.00px;height:19.00px;background:#28365a;"></div>
<span class="t w" style="left:1065.40px;top:659.20px;">260</span>
</div>
</body></html>
